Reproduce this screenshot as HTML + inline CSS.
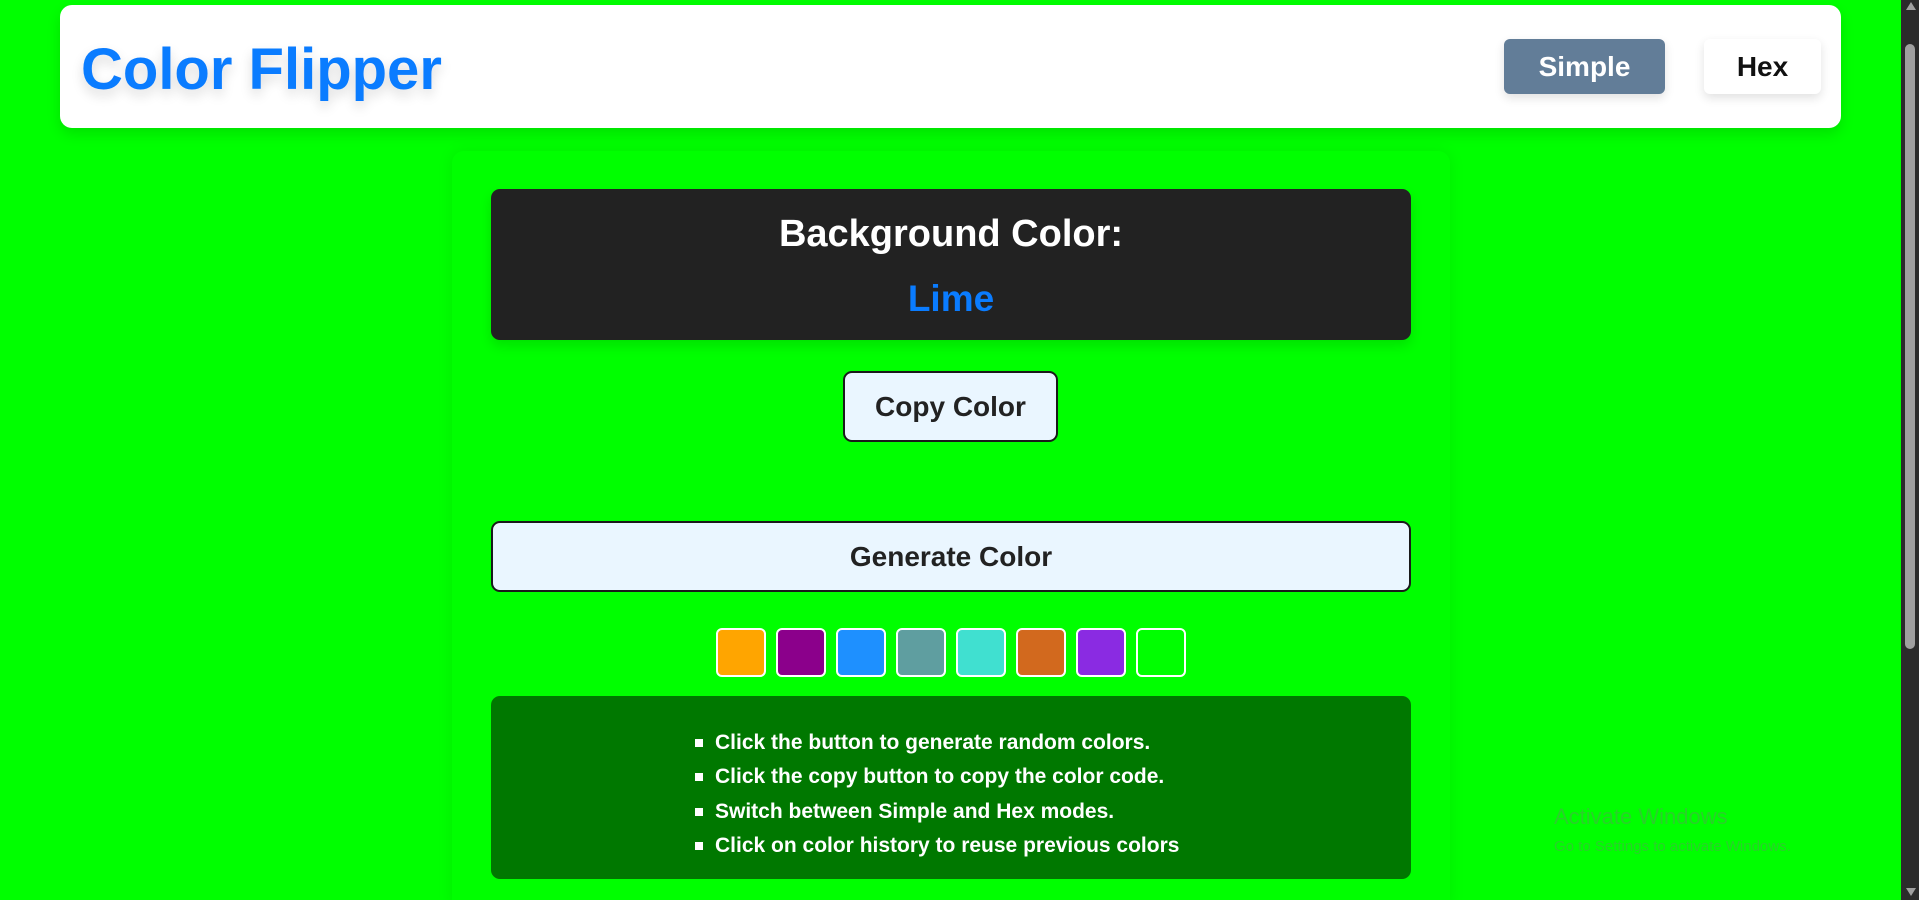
<!DOCTYPE html>
<html><head><meta charset="utf-8"><style>
*{box-sizing:border-box;margin:0;padding:0}
html,body{width:1919px;height:900px;overflow:hidden}
body{background:#00ff00;font-family:"Liberation Sans",sans-serif;position:relative}
.hdr{position:absolute;left:60px;top:5px;width:1781px;height:123px;background:#fff;border-radius:12px;box-shadow:0 6px 14px rgba(0,0,0,.12)}
.title{position:absolute;left:81px;top:36px;font-size:58px;font-weight:bold;color:#0a7cff;text-shadow:0 6px 12px rgba(0,0,0,.15)}
.nb{position:absolute;top:39px;height:55px;border-radius:6px;font-weight:bold;font-size:28px;display:flex;align-items:center;justify-content:center;box-shadow:0 4px 10px rgba(0,0,0,.12)}
.card{position:absolute;left:452px;top:151px;width:998px;height:760px;border-radius:12px;box-shadow:0 0 16px rgba(0,0,0,.08)}
.dark{position:absolute;left:491px;top:189px;width:920px;height:151px;background:#222;border-radius:9px;box-shadow:0 6px 12px rgba(0,0,0,.12);text-align:center}
.btn{position:absolute;background:#eaf6ff;border:2px solid #1a1a1a;border-radius:9px;font-weight:bold;font-size:28px;color:#222;display:flex;align-items:center;justify-content:center}
.sw{position:absolute;top:628px;width:50px;height:49px;border:2px solid #fff;border-radius:6px}
.info{position:absolute;left:491px;top:696px;width:920px;height:183px;background:#007800;border-radius:9px;color:#fff;font-weight:bold;font-size:21px}
.info div{position:absolute;left:224px}
.info div:before{content:"";position:absolute;left:-20px;top:8px;width:8px;height:8px;background:#fff}
.sb{position:absolute;left:1901px;top:0;width:18px;height:900px;background:#2b2b2b}
</style></head><body>
<div class="hdr"></div>
<div class="title">Color Flipper</div>
<div class="nb" style="left:1504px;width:161px;background:#627d98;color:#fff">Simple</div>
<div class="nb" style="left:1704px;width:117px;background:#fff;color:#111">Hex</div>
<div class="card"></div>
<div class="dark">
<div style="color:#fff;font-size:38px;font-weight:bold;margin-top:24px">Background Color:</div>
<div style="color:#0a7cff;font-size:37px;font-weight:bold;margin-top:22px">Lime</div>
</div>
<div class="btn" style="left:843px;top:371px;width:215px;height:71px">Copy Color</div>
<div class="btn" style="left:491px;top:521px;width:920px;height:71px">Generate Color</div>
<div class="sw" style="left:716px;background:orange"></div>
<div class="sw" style="left:776px;background:#8b008b"></div>
<div class="sw" style="left:836px;background:dodgerblue"></div>
<div class="sw" style="left:896px;background:#5f9ea0"></div>
<div class="sw" style="left:956px;background:#40e0d0"></div>
<div class="sw" style="left:1016px;background:chocolate"></div>
<div class="sw" style="left:1076px;background:blueviolet"></div>
<div class="sw" style="left:1136px;background:#00ff00"></div>
<div class="info">
<div style="top:35px">Click the button to generate random colors.</div>
<div style="top:69px">Click the copy button to copy the color code.</div>
<div style="top:104px">Switch between Simple and Hex modes.</div>
<div style="top:138px">Click on color history to reuse previous colors</div>
</div>
<div style="position:absolute;left:1554px;top:804px;color:rgba(120,120,120,.35);font-size:22px">Activate Windows</div>
<div style="position:absolute;left:1554px;top:838px;color:rgba(120,120,120,.35);font-size:15px">Go to Settings to activate Windows.</div>
<div class="sb"><div style="position:absolute;left:5px;top:2px;width:0;height:0;border-left:5px solid transparent;border-right:5px solid transparent;border-bottom:8px solid #9f9f9f"></div><div style="position:absolute;left:4px;top:44px;width:10px;height:605px;background:#9f9f9f;border-radius:5px"></div><div style="position:absolute;left:5px;top:888px;width:0;height:0;border-left:5px solid transparent;border-right:5px solid transparent;border-top:8px solid #9f9f9f"></div></div>
</body></html>
